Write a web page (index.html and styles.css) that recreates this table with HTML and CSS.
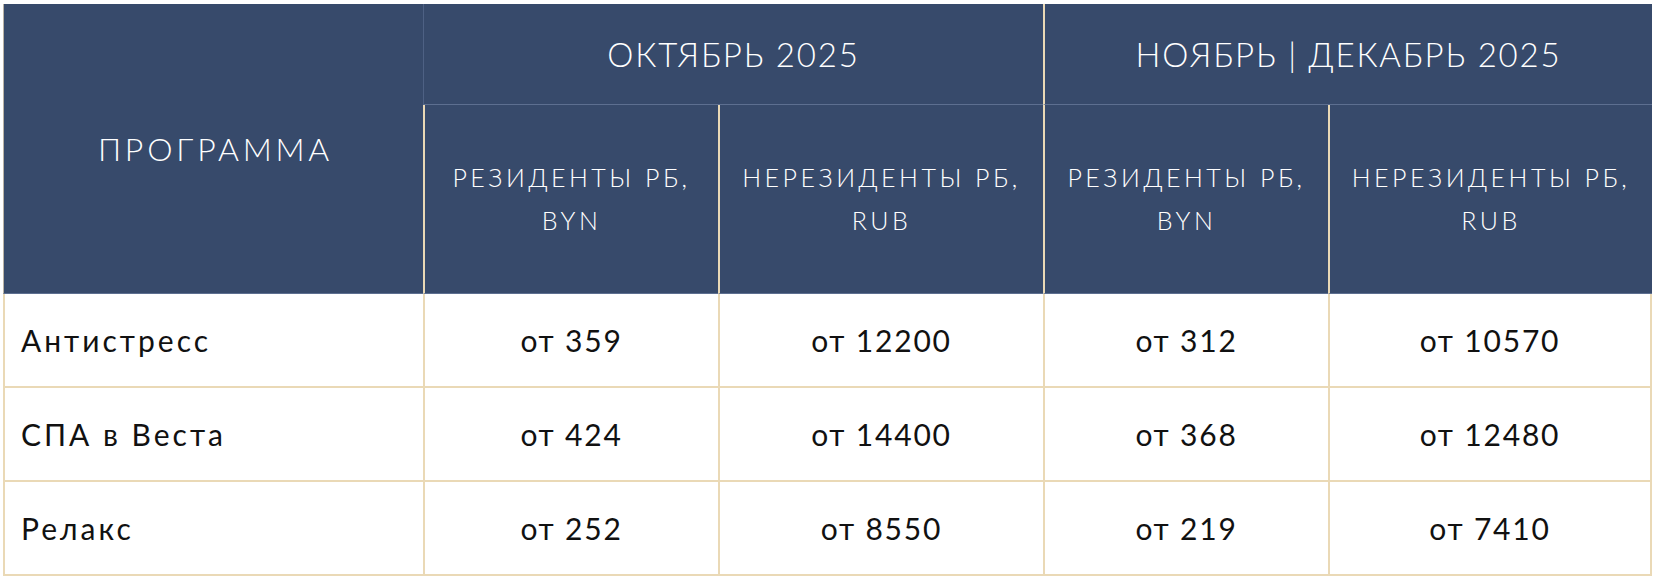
FILE: index.html
```html
<!DOCTYPE html>
<html lang="ru">
<head>
<meta charset="utf-8">
<title>Цены</title>
<link rel="stylesheet" href="styles.css">
</head>
<body>
<div class="wrap">
<table class="prices">
  <colgroup>
    <col class="c-prog">
    <col class="c-a">
    <col class="c-b">
    <col class="c-c">
    <col class="c-d">
  </colgroup>
  <thead>
    <tr class="hr1">
      <th class="prog" rowspan="2">ПРОГРАММА</th>
      <th class="month m1" colspan="2">ОКТЯБРЬ 2025</th>
      <th class="month m2" colspan="2">НОЯБРЬ | ДЕКАБРЬ 2025</th>
    </tr>
    <tr class="hr2">
      <th class="sub">РЕЗИДЕНТЫ РБ,<br>BYN</th>
      <th class="sub">НЕРЕЗИДЕНТЫ РБ,<br>RUB</th>
      <th class="sub">РЕЗИДЕНТЫ РБ,<br>BYN</th>
      <th class="sub last">НЕРЕЗИДЕНТЫ РБ,<br>RUB</th>
    </tr>
  </thead>
  <tbody>
    <tr>
      <td class="name">Антистресс</td>
      <td>от 359</td>
      <td>от 12200</td>
      <td>от 312</td>
      <td class="last">от 10570</td>
    </tr>
    <tr>
      <td class="name">СПА в Веста</td>
      <td>от 424</td>
      <td>от 14400</td>
      <td>от 368</td>
      <td class="last">от 12480</td>
    </tr>
    <tr>
      <td class="name">Релакс</td>
      <td>от 252</td>
      <td>от 8550</td>
      <td>от 219</td>
      <td class="last">от 7410</td>
    </tr>
  </tbody>
</table>
</div>
</body>
</html>
```

FILE: styles.css
```css
html, body {
  margin: 0;
  padding: 0;
  background: #ffffff;
}

.wrap {
  padding: 4px 0 0 3px;
}

.prices {
  border-collapse: separate;
  border-spacing: 0;
  table-layout: fixed;
  width: 1649px;
  font-family: Lato, "Open Sans", "Liberation Sans", sans-serif;
}

.c-prog { width: 420px; }
.c-a { width: 295px; }
.c-b { width: 325px; }
.c-c { width: 285px; }
.c-d { width: 324px; }

thead th {
  background: #374a6b;
  color: #ffffff;
  font-weight: 300;
  text-align: center;
  padding: 0;
}

.prog {
  border-left: 1px solid #b9b3a6;
  border-bottom: 1px solid #5d6f90;
  font-size: 32px;
  letter-spacing: 3.8px;
  padding-left: 4px;
}

.hr1 { height: 101px; }
.hr2 { height: 189px; }

.month {
  font-size: 33px;
  letter-spacing: 1.8px;
  border-bottom: 1px solid #5d6f90;
}

.m1 {
  border-left: 1px solid #4e6184;
}

.m2 {
  border-left: 2px solid #ead9b6;
}

.sub {
  font-size: 25px;
  line-height: 43px;
  letter-spacing: 3.5px;
  border-left: 2px solid #ead9b6;
  border-bottom: 1px solid #5d6f90;
}

tbody td {
  height: 92px;
  border-left: 2px solid #ead9b6;
  border-bottom: 2px solid #ead9b6;
  font-size: 30px;
  color: #111111;
  text-align: center;
  padding: 0;
  letter-spacing: 1.8px;
}

tbody td.name {
  text-align: left;
  padding-left: 16px;
  letter-spacing: 3px;
}

tbody td.last {
  border-right: 2px solid #ead9b6;
}
```
